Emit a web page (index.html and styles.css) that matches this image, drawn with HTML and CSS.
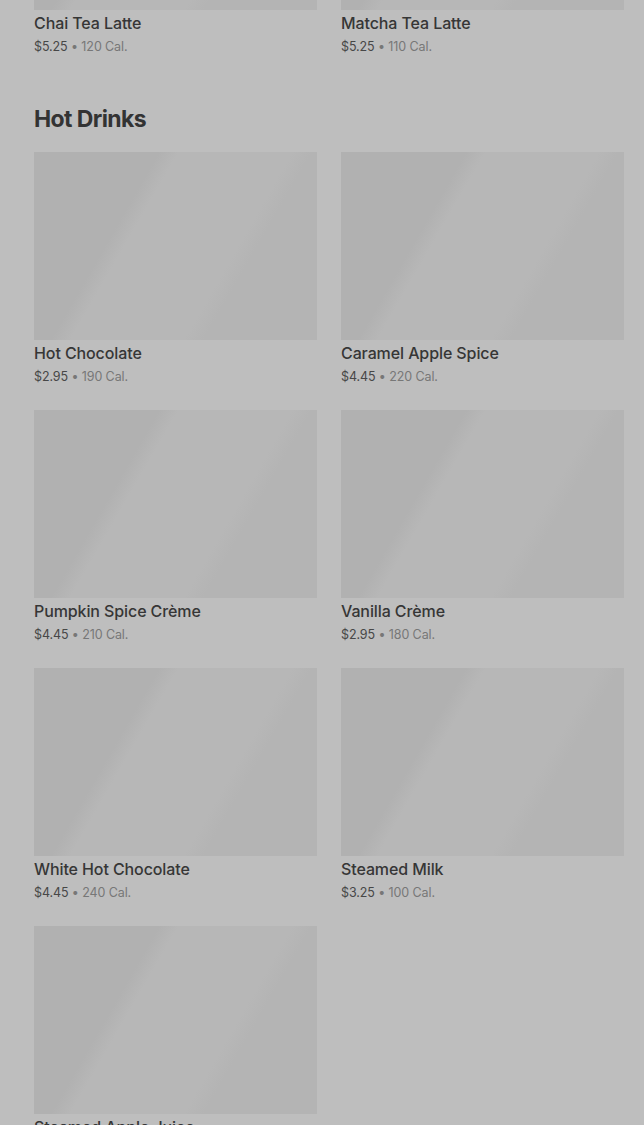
FILE: index.html
```html
<!DOCTYPE html>
<html lang="en">
<head>
<meta charset="utf-8">
<title>Menu</title>
<link rel="stylesheet" href="styles.css">
</head>
<body>
<main class="menu">
  <section class="category">
    <div class="grid">
      <div class="card"><div class="thumb"></div><div class="name">Chai Tea Latte</div><div class="meta"><span class="price">$5.25</span> • 120 Cal.</div></div>
      <div class="card"><div class="thumb"></div><div class="name">Matcha Tea Latte</div><div class="meta"><span class="price">$5.25</span> • 110 Cal.</div></div>
    </div>
  </section>
  <section class="category spaced">
    <h2 class="heading">Hot Drinks</h2>
    <div class="grid">
      <div class="card"><div class="thumb"></div><div class="name">Hot Chocolate</div><div class="meta"><span class="price">$2.95</span> • 190 Cal.</div></div>
      <div class="card"><div class="thumb"></div><div class="name">Caramel Apple Spice</div><div class="meta"><span class="price">$4.45</span> • 220 Cal.</div></div>
      <div class="card"><div class="thumb"></div><div class="name">Pumpkin Spice Crème</div><div class="meta"><span class="price">$4.45</span> • 210 Cal.</div></div>
      <div class="card"><div class="thumb"></div><div class="name">Vanilla Crème</div><div class="meta"><span class="price">$2.95</span> • 180 Cal.</div></div>
      <div class="card"><div class="thumb"></div><div class="name">White Hot Chocolate</div><div class="meta"><span class="price">$4.45</span> • 240 Cal.</div></div>
      <div class="card"><div class="thumb"></div><div class="name">Steamed Milk</div><div class="meta"><span class="price">$3.25</span> • 100 Cal.</div></div>
      <div class="card"><div class="thumb"></div><div class="name">Steamed Apple Juice</div><div class="meta"><span class="price">$3.25</span> • 190 Cal.</div></div>
    </div>
  </section>
</main>
</body>
</html>
```
FILE: styles.css
```css
html, body {
  margin: 0;
  padding: 0;
  background: #bebebe;
  overflow: hidden;
}
body {
  font-family: Inter, "Noto Sans", Arial, sans-serif;
  color: #333333;
}
.menu {
  margin-top: -178px;
  padding: 0 20px 0 34px;
}
.category.spaced {
  margin-top: 46px;
}
.heading {
  margin: 0 0 17px 0;
  font-size: 23px;
  line-height: 32px;
  font-weight: 700;
  letter-spacing: -0.6px;
  color: #333333;
}
.grid {
  display: grid;
  grid-template-columns: 283px 283px;
  column-gap: 24px;
  row-gap: 23px;
}
.thumb {
  height: 188px;
  background: linear-gradient(120deg, #b1b1b1 0%, #b1b1b1 32%, #b7b7b7 37%, #b7b7b7 66%, #b4b4b4 71%, #b4b4b4 100%);
}
.name {
  font-size: 16px;
  line-height: 26px;
  font-weight: 500;
  color: #363636;
  letter-spacing: -0.1px;
}
.meta {
  margin-top: 1px;
  font-size: 12.5px;
  line-height: 20px;
  color: #777777;
  letter-spacing: -0.1px;
}
.price {
  color: #474747;
}
```
